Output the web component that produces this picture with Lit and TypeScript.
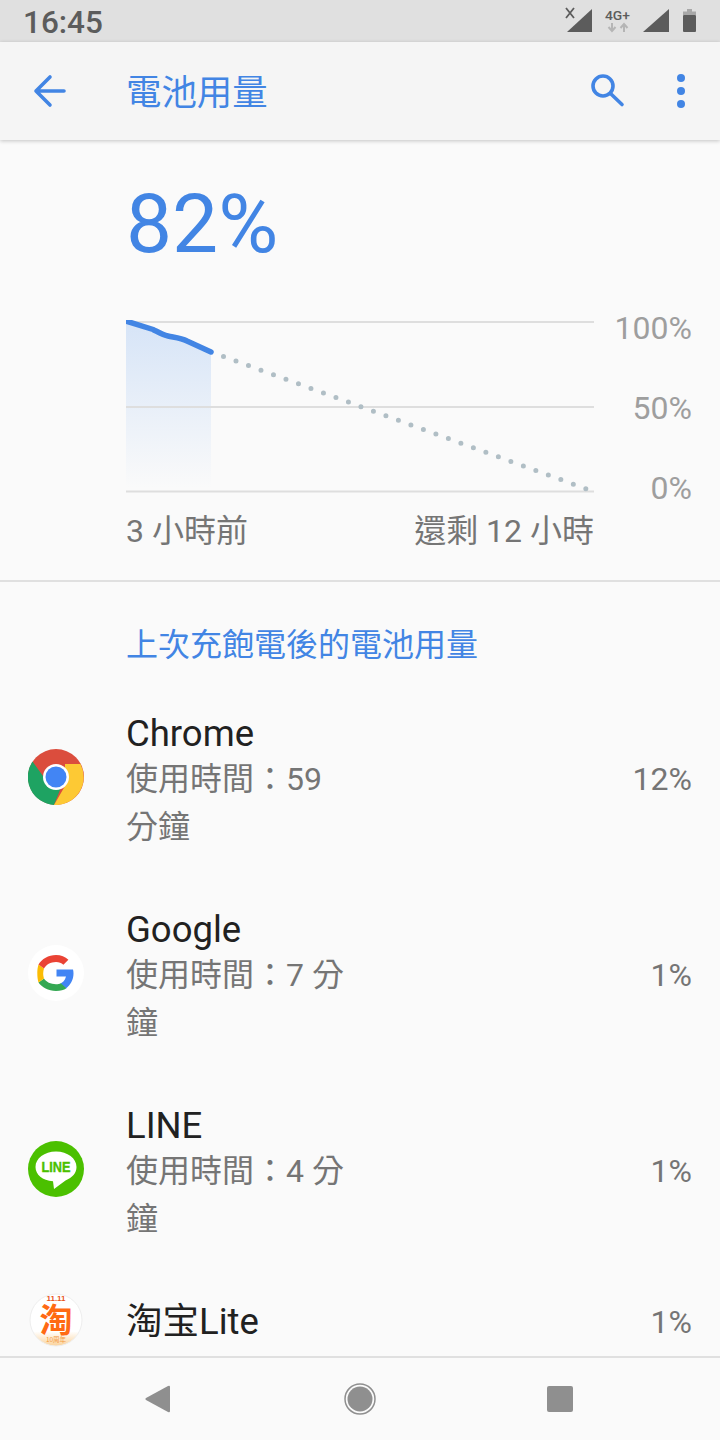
import { LitElement, html, css, svg } from "lit";
import { customElement } from "lit/decorators.js";

const chromeIcon = svg`
  <circle cx="28" cy="28" r="28" fill="#db4d3d"/>
  <path d="M15 27 L4.500 12.500 A28 28 0 0 0 26 56 L34 36 Z" fill="#1ea362"/>
  <path d="M37 15 H52.500 A28 28 0 0 1 26 56 L37 37 Z" fill="#fdc934"/>
  <circle cx="28" cy="28" r="13" fill="#fff"/>
  <circle cx="28" cy="28" r="10.500" fill="#4285f4"/>`;

const googleIcon = svg`
  <circle cx="28" cy="28" r="28" fill="#fff"/>
  <path d="M45 24.500 H28.500 V31.500 H38 C37 35.500 34.500 37.500 32.500 38.500 L38 43.500 C42.500 40 45.500 34.500 45.500 28.500 C45.500 27 45.300 25.500 45 24.500 Z" fill="#4285f4"/>
  <path d="M16 33.500 L10.500 37.500 C13.800 42.200 20.400 46 28 46 C32.600 46 35.800 45 38.400 43.200 L32.800 38.200 C31.400 38.800 30 39.200 28 39.200 C22.800 39.200 18 37 16 33.500 Z" fill="#34a853"/>
  <path d="M10.500 19.500 C9.700 22 9.300 25 9.300 28 C9.300 32 9.700 35 10.500 37.500 L16 33.500 C15.400 31.400 15.200 29.800 15.200 28.200 C15.200 26.600 15.600 25 16 23.500 Z" fill="#fbbc05"/>
  <path d="M28 10 C20.400 10 13.800 14 10.500 19.500 L16 23.500 C18 19.800 22.600 17 28 17 C31 17 33.400 18 35.400 19.800 L40.400 14.800 C37.200 11.800 33 10 28 10 Z" fill="#ea4335"/>`;

const lineIcon = svg`
  <circle cx="28" cy="28" r="28" fill="#4bc000"/>
  <path d="M28 10.500 C16.400 10.500 7.500 17.400 7.500 26 C7.500 33.600 14.500 39.400 25 40.300 L26 48 L37.500 39.400 C44.400 36.600 48.500 32 48.500 26 C48.500 17.400 39.600 10.500 28 10.500 Z" fill="#fff"/>
  <text x="13.500" y="31" textLength="29" lengthAdjust="spacingAndGlyphs" font-family="Liberation Sans, sans-serif" font-size="14.500" font-weight="700" fill="#4bc000" stroke="#4bc000" stroke-width="0.400">LINE</text>`;

const taobaoIcon = svg`
  <defs>
    <linearGradient id="tb" x1="0" y1="0" x2="0" y2="1">
      <stop offset="0.72" stop-color="#fff"/>
      <stop offset="1" stop-color="#fbd29a"/>
    </linearGradient>
  </defs>
  <circle cx="28" cy="28" r="26" fill="url(#tb)" stroke="#eeeeee"/>
  <text x="28" y="9" text-anchor="middle" font-family="Liberation Sans, sans-serif" font-size="8" font-weight="700" fill="#e8541a">11.11</text>
  <text x="28" y="40" text-anchor="middle" font-family="Noto Sans CJK SC, sans-serif" font-size="33" font-weight="700" fill="#ff6a13">淘</text>
  <text x="28" y="50" text-anchor="middle" font-family="Noto Sans CJK SC, sans-serif" font-size="6.500" fill="#f39a3c">10周年</text>`;

interface AppRow {
  name: string;
  usage?: string;
  percent: string;
  icon: unknown;
}

const rows: AppRow[] = [
  { name: "Chrome", usage: "使用時間：59 分鐘", percent: "12%", icon: chromeIcon },
  { name: "Google", usage: "使用時間：7 分鐘", percent: "1%", icon: googleIcon },
  { name: "LINE", usage: "使用時間：4 分鐘", percent: "1%", icon: lineIcon },
  { name: "淘宝Lite", percent: "1%", icon: taobaoIcon },
];

@customElement("app-root")
export class AppRoot extends LitElement {
  static styles = css`
    :host {
      display: flex;
      flex-direction: column;
      width: 720px;
      height: 1440px;
      overflow: hidden;
      background: #fafafa;
      font-family: Roboto, "Noto Sans CJK TC", sans-serif;
    }
    svg { display: block; flex: none; }

    .status {
      flex: none;
      height: 42px;
      background: #e0e0e0;
      display: flex;
      align-items: center;
      padding: 0 24px 0 23px;
      color: #5c5c5c;
    }
    .time { font-size: 31.5px; font-weight: 500; flex: 1; margin-top: 2px; }
    .status-icons { width: 132px; height: 42px; }

    .appbar {
      flex: none;
      height: 98px;
      background: #f5f5f5;
      display: flex;
      align-items: center;
      box-shadow: 0 1px 4px rgba(0, 0, 0, 0.22);
      position: relative;
      color: #4285e4;
    }
    .appbar .back { margin-left: 28px; width: 44px; height: 44px; }
    .appbar .title { font-size: 35.4px; margin: 0 0 4px 54px; flex: 1; }
    .appbar .search { width: 40px; height: 40px; margin-right: 48px; }
    .appbar .more { width: 12px; height: 40px; margin-right: 33px; }

    .content { flex: 1; min-height: 0; overflow: hidden; }

    .summary { padding: 28px 28px 0 126px; }
    .level {
      font-size: 82px;
      font-weight: 400;
      line-height: 112px;
      color: #4285e4;
    }
    .chart { display: flex; margin-top: 40px; }
    .labels {
      flex: 1;
      height: 200px;
      margin-top: -12px;
      display: flex;
      flex-direction: column;
      justify-content: space-between;
      align-items: flex-end;
      font-size: 32px;
      line-height: 40px;
      color: #9e9e9e;
    }
    .axis {
      width: 468px;
      display: flex;
      justify-content: space-between;
      font-size: 32px;
      line-height: 44px;
      color: #757575;
      margin-top: 1px;
    }
    .divider {
      height: 2px;
      background: #e0e0e0;
      margin-top: 27px;
    }
    .section {
      font-size: 32px;
      line-height: 44px;
      color: #4285e4;
      padding: 41px 0 0 126px;
      margin-bottom: 12px;
    }

    .row {
      display: flex;
      align-items: center;
      padding: 24px 28px;
    }
    .row.single { min-height: 106px; padding-top: 0; padding-bottom: 0; box-sizing: border-box; }
    .row .icon { width: 56px; height: 56px; margin-right: 42px; }
    .row .text { flex: 1; min-width: 0; margin-top: 10px; }
    .row.single .text { margin-top: 4px; }
    .row .name { font-size: 36.500px; line-height: 42px; color: #212121; }
    .row .usage { font-size: 32px; line-height: 48px; color: #757575; width: 225px; }
    .row .percent { font-size: 32px; color: #757575; margin-top: 4px; }

    .nav {
      flex: none;
      height: 84px;
      border-top: 2px solid #e0e0e0;
      box-sizing: border-box;
      background: #fafafa;
      display: flex;
      align-items: center;
      justify-content: center;
      gap: 168px;
    }
    .nav svg { width: 32px; height: 32px; }
  `;

  render() {
    return html`
      <div class="status">
        <span class="time">16:45</span>
        <svg class="status-icons" viewBox="0 0 132 42">
          <path d="M2 8 L10 18 M10 8 L2 18" stroke="#5c5c5c" stroke-width="1.800" fill="none"/>
          <path d="M28 9 V32 H3 Z" fill="#5c5c5c"/>
          <text x="41" y="20" textLength="25" lengthAdjust="spacingAndGlyphs" font-family="Roboto, sans-serif" font-size="13.500" font-weight="500" fill="#5c5c5c">4G+</text>
          <path d="M48 23 V30 M44.500 27 L48 31 L51.500 27 M60 32 V25 M56.500 28 L60 24 L63.500 28" stroke="#b5b5b5" stroke-width="2" fill="none"/>
          <path d="M105 9 V32 H79 Z" fill="#5c5c5c"/>
          <path d="M123 9 H128 V11.500 H132 V15 H119 V11.500 H123 Z" fill="#a8a8a8"/>
          <rect x="119" y="15" width="13" height="17" rx="1" fill="#5c5c5c"/>
        </svg>
      </div>

      <div class="appbar">
        <svg class="back" viewBox="0 0 44 44">
          <path d="M36 22 H8 M22 8 L8 22 L22 36" stroke="currentColor" stroke-width="3.600" stroke-linecap="round" stroke-linejoin="round" fill="none"/>
        </svg>
        <span class="title">電池用量</span>
        <svg class="search" viewBox="0 0 40 40">
          <circle cx="16" cy="15" r="10" stroke="currentColor" stroke-width="3.600" fill="none"/>
          <path d="M23.500 22.500 L35 33.500" stroke="currentColor" stroke-width="3.600" stroke-linecap="round"/>
        </svg>
        <svg class="more" viewBox="0 0 12 40">
          <circle cx="6" cy="7" r="4" fill="currentColor"/>
          <circle cx="6" cy="20" r="4" fill="currentColor"/>
          <circle cx="6" cy="33" r="4" fill="currentColor"/>
        </svg>
      </div>

      <div class="content">
        <div class="summary">
          <div class="level">82%</div>
          <div class="chart">
            <svg width="468" height="176" viewBox="126 320 468 176">
              <defs>
                <linearGradient id="area" x1="0" y1="0" x2="0" y2="1">
                  <stop offset="0" stop-color="#d6e4f7"/>
                  <stop offset="1" stop-color="#fafafa"/>
                </linearGradient>
              </defs>
              <path d="M126 321 L153 329.500 C158 332 163 335 168 336 C175 337.500 181 338 187 341 L211 352 V488 H126 Z" fill="url(#area)"/>
              <path d="M126 322 H594 M126 407 H594 M126 491.500 H594" stroke="#dedede" stroke-width="2" fill="none"/>
              <path d="M126 321 L153 329.500 C158 332 163 335 168 336 C175 337.500 181 338 187 341 L211 352" stroke="#4285e4" stroke-width="5.500" stroke-linecap="round" fill="none"/>
              <path d="M223.500 356.500 L592 491" stroke="#b0bec5" stroke-width="5" stroke-linecap="round" stroke-dasharray="0 13.300" fill="none"/>
            </svg>
            <div class="labels"><span>100%</span><span>50%</span><span>0%</span></div>
          </div>
          <div class="axis"><span>3 小時前</span><span>還剩 12 小時</span></div>
        </div>
        <div class="divider"></div>
        <div class="section">上次充飽電後的電池用量</div>
        ${rows.map(
          (r) => html`
            <div class="row ${r.usage ? "" : "single"}">
              <svg class="icon" viewBox="0 0 56 56">${r.icon}</svg>
              <div class="text">
                <div class="name">${r.name}</div>
                ${r.usage ? html`<div class="usage">${r.usage}</div>` : null}
              </div>
              <span class="percent">${r.percent}</span>
            </div>
          `
        )}
      </div>

      <div class="nav">
        <svg viewBox="0 0 32 32"><path d="M26 4 V28 Q26 30 24 29 L2 17 Q0.500 16 2 15 L24 3 Q26 2 26 4 Z" fill="#8f8f8f"/></svg>
        <svg viewBox="0 0 32 32"><circle cx="16" cy="16" r="15" fill="none" stroke="#8f8f8f" stroke-width="1.500"/><circle cx="16" cy="16" r="12.500" fill="#8f8f8f"/></svg>
        <svg viewBox="0 0 32 32"><rect x="3" y="3" width="26" height="26" rx="2" fill="#8f8f8f"/></svg>
      </div>
    `;
  }
}
